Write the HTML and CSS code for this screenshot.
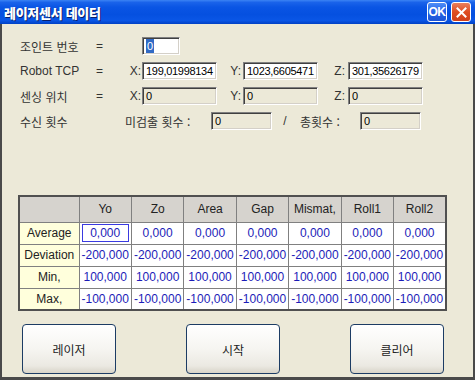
FILE: index.html
```html
<!DOCTYPE html>
<html lang="ko">
<head>
<meta charset="utf-8">
<title>레이저센서 데이터</title>
<link rel="stylesheet" href="styles.css">
</head>
<body>
<div class="window">
  <div class="titlebar">
    <span class="title">레이저센서 데이터</span>
    <div class="tb-buttons">
      <span class="tb-btn ok">OK</span>
      <span class="tb-btn close"><svg width="11" height="11" viewBox="0 0 11 11"><path d="M1.5 1.5 L9.5 9.5 M9.5 1.5 L1.5 9.5" stroke="#fff" stroke-width="2" stroke-linecap="square"/></svg></span>
    </div>
  </div>
  <div class="client">
    <div class="form">
      <div class="row">
        <span class="lbl">조인트 번호</span><span class="eq">=</span>
        <span class="field white w-joint"><span class="sel">0</span></span>
      </div>
      <div class="row">
        <span class="lbl latin">Robot TCP</span><span class="eq">=</span>
        <span class="ax ax-x">X:</span><span class="field white w-xyz">199,01998134</span>
        <span class="ax ax-y">Y:</span><span class="field white w-xyz">1023,6605471</span>
        <span class="ax ax-z">Z:</span><span class="field white w-xyz">301,35626179</span>
      </div>
      <div class="row">
        <span class="lbl">센싱 위치</span><span class="eq">=</span>
        <span class="ax ax-x">X:</span><span class="field w-xyz">0</span>
        <span class="ax ax-y">Y:</span><span class="field w-xyz">0</span>
        <span class="ax ax-z">Z:</span><span class="field w-xyz">0</span>
      </div>
      <div class="row">
        <span class="lbl">수신 횟수</span><span class="eq"></span>
        <span class="cnt-lbl">미검출 횟수 :</span><span class="field w-cnt">0</span>
        <span class="slash">/</span>
        <span class="tot-lbl">총횟수 :</span><span class="field w-cnt">0</span>
      </div>
    </div>

    <table class="grid">
      <colgroup>
        <col class="c-lbl"><col><col><col><col><col><col><col>
      </colgroup>
      <tr class="head">
        <th></th><th>Yo</th><th>Zo</th><th>Area</th><th>Gap</th><th>Mismat,</th><th>Roll1</th><th>Roll2</th>
      </tr>
      <tr>
        <th class="rl">Average</th><td><span class="focus">0,000</span></td><td>0,000</td><td>0,000</td><td>0,000</td><td>0,000</td><td>0,000</td><td>0,000</td>
      </tr>
      <tr>
        <th class="rl">Deviation</th><td>-200,000</td><td>-200,000</td><td>-200,000</td><td>-200,000</td><td>-200,000</td><td>-200,000</td><td>-200,000</td>
      </tr>
      <tr>
        <th class="rl">Min,</th><td>100,000</td><td>100,000</td><td>100,000</td><td>100,000</td><td>100,000</td><td>100,000</td><td>100,000</td>
      </tr>
      <tr>
        <th class="rl">Max,</th><td>-100,000</td><td>-100,000</td><td>-100,000</td><td>-100,000</td><td>-100,000</td><td>-100,000</td><td>-100,000</td>
      </tr>
    </table>

    <div class="buttons">
      <button class="btn">레이저</button>
      <button class="btn">시작</button>
      <button class="btn">클리어</button>
    </div>
  </div>
</div>
</body>
</html>
```
FILE: styles.css
```css
* { box-sizing: border-box; }
html, body { margin: 0; padding: 0; }
body {
  width: 475px;
  height: 380px;
  overflow: hidden;
  background: #ECE9D8;
  font-family: "Liberation Sans", "Noto Sans CJK KR", sans-serif;
  font-size: 12px;
  color: #000;
}
.window {
  width: 475px;
  height: 380px;
  display: flex;
  flex-direction: column;
}
.titlebar {
  height: 24px;
  flex: none;
  display: flex;
  align-items: center;
  justify-content: space-between;
  padding: 0 4px 0 4px;
  background: linear-gradient(to bottom, #3b83f4 0%, #1a63ea 10%, #0a55e4 30%, #0550e0 60%, #0a56e6 85%, #0041c4 100%);
}
.title {
  font-family: "Noto Sans CJK KR", sans-serif;
  font-weight: 900;
  font-size: 13px;
  color: #fff;
  letter-spacing: -0.3px;
  text-shadow: 1px 1px 0 #0a1f6a;
}
.tb-buttons { display: flex; gap: 4px; }
.tb-btn {
  width: 20px;
  height: 20px;
  border: 1px solid #fff;
  border-radius: 3px;
  display: flex;
  align-items: center;
  justify-content: center;
  color: #fff;
  font-weight: 700;
  font-size: 12px;
  font-family: "Liberation Sans", sans-serif;
}
.tb-btn.ok {
  background: linear-gradient(to bottom, #4f8ef7 0%, #2462e6 50%, #1d55d6 100%);
  letter-spacing: -0.5px;
}
.tb-btn.close {
  background: linear-gradient(to bottom, #e9805e 0%, #df4d22 50%, #d0401a 100%);
}
.client {
  flex: 1;
  display: flex;
  flex-direction: column;
  border-left: 2px solid #4a4a4a;
  border-right: 2px solid #4a4a4a;
  border-bottom: 3px solid #4a4a4a;
}
.form {
  padding: 13px 0 0 18px;
  display: flex;
  flex-direction: column;
  gap: 7px;
}
.row {
  display: flex;
  align-items: center;
  height: 18px;
}
.lbl {
  width: 76px;
  font-family: "Noto Sans CJK KR", sans-serif;
  font-size: 12px;
  color: #333;
}
.lbl.latin { font-family: "Liberation Sans", sans-serif; }
.eq { width: 29px; color: #333; }
.ax { text-align: right; color: #333; padding-right: 2px; }
.ax-x { width: 17px; padding-right: 1px; }
.ax-y { width: 26px; }
.ax-z { width: 30px; padding-right: 3px; }
.field {
  height: 18px;
  display: flex;
  align-items: center;
  padding-left: 3px;
  font-size: 11px;
  letter-spacing: -0.3px;
  color: #000;
  background: #ECE9D8;
  border-top: 1px solid #808080;
  border-left: 1px solid #808080;
  border-right: 1px solid #ffffff;
  border-bottom: 1px solid #ffffff;
  box-shadow: inset 1px 1px 0 #404040, inset -1px -1px 0 #d4d0c8;
  white-space: nowrap;
  overflow: hidden;
}
.field.white { background: #fff; }
.w-joint { width: 38px; margin-left: 17px; }
.w-xyz { width: 75px; }
.w-cnt { width: 61px; }
.sel {
  background: #316ac5;
  color: #fff;
  height: 14px;
  padding: 0 1px;
  display: flex;
  align-items: center;
}
.cnt-lbl, .tot-lbl {
  font-family: "Noto Sans CJK KR", sans-serif;
  color: #333;
}
.cnt-lbl { width: 86px; }
.slash { width: 26px; text-align: center; color: #333; }
.tot-lbl { width: 62px; padding-left: 2px; }

.grid {
  margin: 65px 0 0 16px;
  width: 429px;
  border-collapse: collapse;
  table-layout: fixed;
  border: 2px solid #505050;
}
.grid col.c-lbl { width: 60px; }
.grid th, .grid td {
  border: 1px solid #808080;
  height: 22px;
  padding: 0;
  text-align: center;
  font-weight: 400;
  font-size: 12px;
  white-space: nowrap;
}
.grid tr.head th {
  height: 26px;
  background: #d6d3ce;
  color: #222;
}
.grid th.rl {
  background: #ffffdc;
  color: #222;
}
.grid td {
  background: #fff;
  color: #1c1cb8;
}
.focus {
  display: block;
  margin: 0 2px;
  height: 18px;
  line-height: 16px;
  border: 1px solid #3a3ae0;
}
.buttons {
  margin-top: 13px;
  display: flex;
  justify-content: space-between;
  padding: 0 29px 0 20px;
}
.btn {
  width: 94px;
  height: 50px;
  border: 1px solid #1c3c64;
  border-radius: 4px;
  background: linear-gradient(to bottom, #ffffff 0%, #f6f5f1 50%, #ebe9e2 85%, #d8d4c8 100%);
  font-family: "Noto Sans CJK KR", sans-serif;
  font-size: 12px;
  color: #222;
  padding: 0;
}
```
